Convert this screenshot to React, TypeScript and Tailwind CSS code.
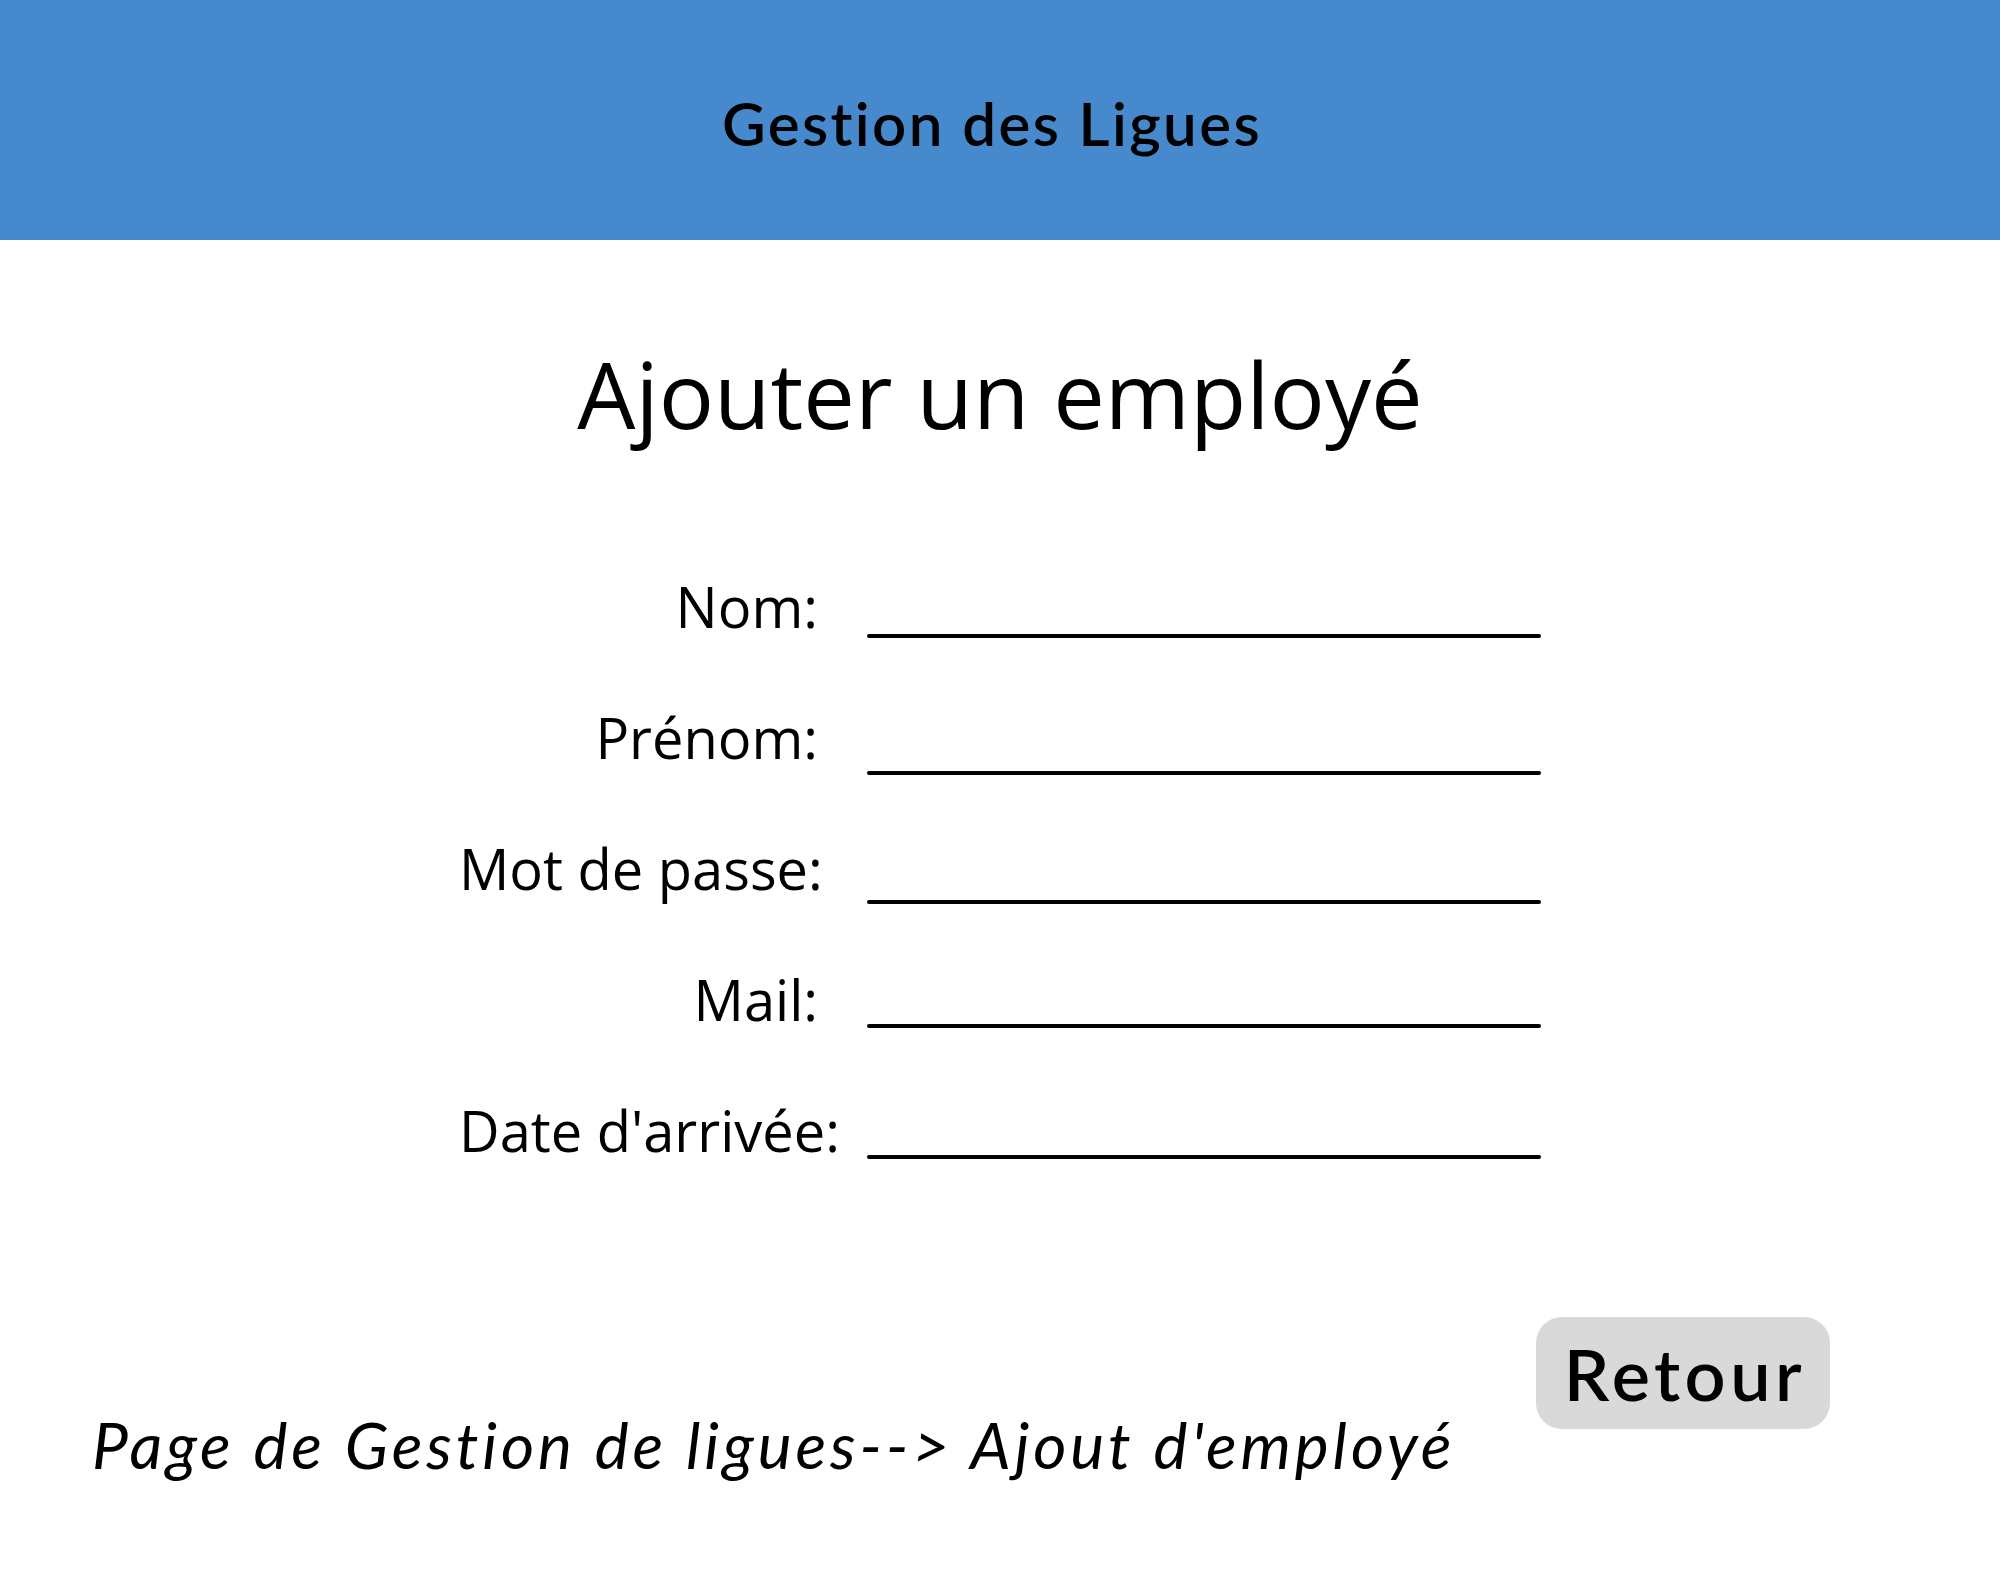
const champs = [
  { label: 'Nom:', ligne: 'mb-[-4px]' },
  { label: 'Prénom:', ligne: 'mb-[-10px]' },
  { label: 'Mot de passe:', ligne: 'mb-[-8px]' },
  { label: 'Mail:', ligne: 'mb-[-1px]' },
  { label: "Date d'arrivée:", ligne: 'mb-[-1px]' },
]

export default function App() {
  return (
    <div className="min-h-[1570px] bg-white font-['Open_Sans',sans-serif] text-black">
      {/* Bandeau */}
      <header className="h-[240px] bg-[#4789cd] flex items-center justify-center">
        <h1 className="pt-[5px] pr-[16px] font-['Lato',sans-serif] font-semibold text-[60px] leading-none tracking-[2.4px]">
          Gestion des Ligues
        </h1>
      </header>

      <h2 className="mt-[108px] text-center text-[92px] leading-none">Ajouter un employé</h2>

      {/* Formulaire */}
      <div className="mx-auto mt-[138px] w-[1082px] flex flex-col gap-[75px]">
        {champs.map((champ) => (
          <div key={champ.label} className="flex items-end gap-[49px]">
            <label className="w-[359px] shrink-0 text-right text-[56px] leading-none whitespace-nowrap">
              {champ.label}
            </label>
            <div className={`flex-1 h-1 rounded-full bg-black ${champ.ligne}`} />
          </div>
        ))}
      </div>

      {/* Bas de page */}
      <div className="mt-[159px] flex items-end justify-between pl-[92px] pr-[170px]">
        <p className="font-['Lato',sans-serif] italic text-[64px] leading-none tracking-[3.9px] whitespace-nowrap">
          Page de Gestion de ligues--&gt; Ajout d'employé
        </p>
        <button className="mb-[48px] w-[294px] h-[112px] pl-[4px] rounded-[26px] bg-[#d9d9d9] font-['Lato',sans-serif] font-semibold text-[72px] leading-none tracking-[4.5px]">
          Retour
        </button>
      </div>
    </div>
  )
}
